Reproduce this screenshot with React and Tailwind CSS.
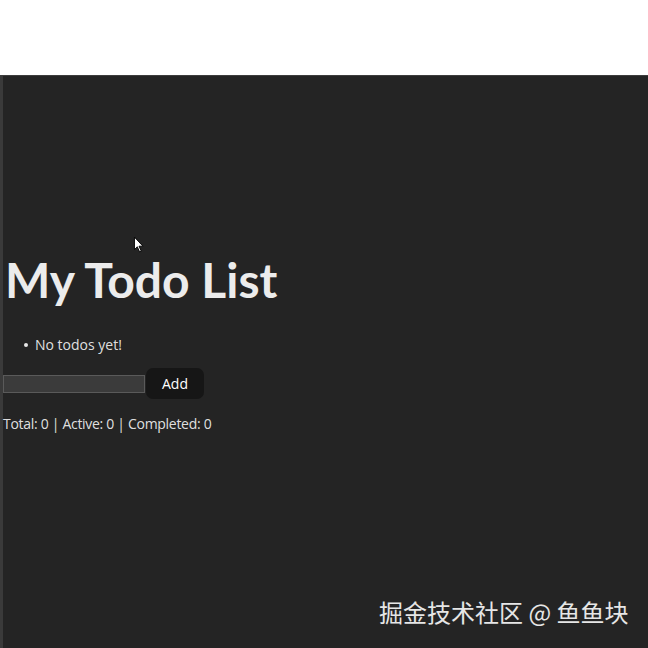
export default function App() {
  return (
    <div className="relative w-[648px] h-[648px] overflow-hidden bg-white" style={{ fontFamily: '"Open Sans", "Noto Sans CJK SC", sans-serif' }}>
      {/* white strip above the window */}
      <div className="h-[75px] bg-white" />

      {/* app window */}
      <div className="flex h-[573px] border-t border-[#3d3d3d] bg-[#242424]">
        <div className="w-[3px] bg-[#3a3a3a]" />
        <div className="flex-1 text-[rgba(255,255,255,0.87)]">
          <h1
            className="mt-[177px] ml-[2px] text-[48px] leading-[54px] font-bold text-[#ececec]"
            style={{ fontFamily: 'Lato, sans-serif' }}
          >
            My Todo List
          </h1>

          <ul className="mt-[28px] ml-[21px] text-[14px] leading-[20px]">
            <li className="flex items-center gap-[7px]">
              <span className="w-[4px] h-[4px] rounded-full bg-[#e8e8e8]" />
              <span>No todos yet!</span>
            </li>
          </ul>

          <div className="mt-[13px] flex items-center">
            <input
              type="text"
              className="w-[142px] h-[18px] bg-[#3b3b3b] border border-[#5a5a5a] outline-none"
            />
            <button className="ml-[1px] h-[31px] w-[58px] rounded-[7px] bg-[#161616] text-[14px] font-medium text-white">
              Add
            </button>
          </div>

          <p className="mt-[15px] text-[14px] leading-[20px] tracking-[-0.3px]">
            Total: 0 | Active: 0 | Completed: 0
          </p>
        </div>
      </div>

      {/* mouse cursor */}
      <svg className="absolute left-[133px] top-[236px]" width="12" height="17" viewBox="0 0 10 15">
        <path d="M1 1 L1 12 L3.5 9.5 L5.5 14 L7 13.3 L5 9 L8.5 9 Z" fill="#fff" stroke="#000" strokeWidth="0.8" />
      </svg>

      {/* watermark */}
      <div
        className="absolute left-[379px] top-[596px] text-[24px] leading-[32px] text-[#e6e6e6]"
        style={{ fontFamily: '"Noto Sans CJK SC", sans-serif' }}
      >
        掘金技术社区 @ 鱼鱼块
      </div>
    </div>
  );
}
